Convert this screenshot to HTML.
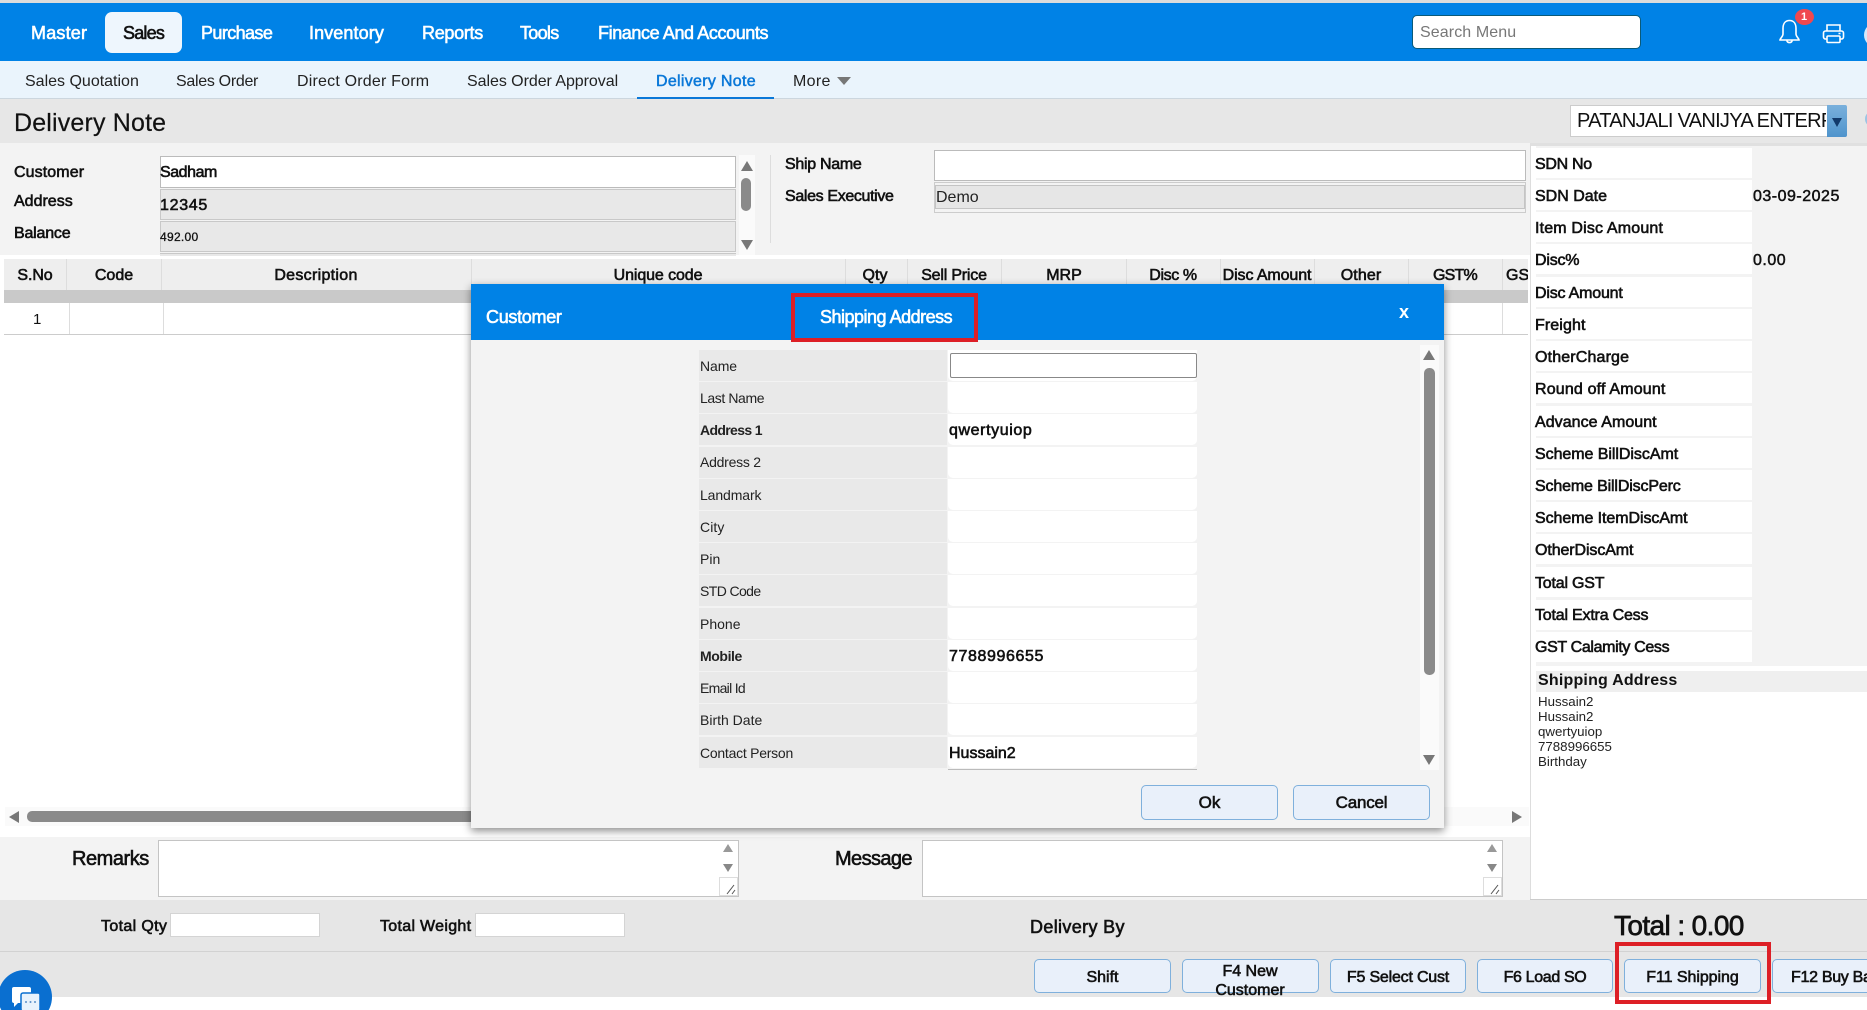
<!DOCTYPE html>
<html lang="en">
<head>
<meta charset="utf-8">
<title>Delivery Note</title>
<style>
html,body{margin:0;padding:0;background:#fff;width:1867px;height:1010px;overflow:hidden}
#page{width:1867px;height:1010px;position:relative;overflow:hidden;font-family:"Liberation Sans",Arial,sans-serif;color:#111;font-size:16px}
.b,.t,svg.a{position:absolute}
.t{white-space:nowrap;line-height:20px;height:20px}
.s{-webkit-text-stroke:.6px currentColor}
.n{color:#fff;font-size:18px;-webkit-text-stroke:.6px #fff;top:23px}
.sn{font-size:16px;top:72px;color:#222}
.th{font-size:16px;top:266px;-webkit-text-stroke:.6px #111;transform:translateX(-50%)}
.v{position:absolute;width:1px;background:#ddd}
.lb{position:absolute;left:699px;width:248px;height:31px;background:#e9e9e9}
.vl{position:absolute;left:948px;width:249px;height:31px;background:#fff;border-radius:0 0 5px 5px}
.ml{font-size:14px;left:700px;color:#222}
.mv{font-size:16px;left:949px;-webkit-text-stroke:.6px #111}
.rl{position:absolute;left:1536px;width:216px;height:30px;background:#fff}
.rt{left:1535px;font-size:16px;-webkit-text-stroke:.6px #111}
.btn{position:absolute;background:#e9f0fa;border:1px solid #7fb0dc;border-radius:5px;box-sizing:border-box;text-align:center;-webkit-text-stroke:.6px #111;font-size:16px;color:#111}
</style>
</head>
<body>
<div id="page">
<!-- top bars -->
<div class="b" style="left:0;top:0;width:1867px;height:3px;background:#dcdcdc"></div>
<div class="b" style="left:0;top:3px;width:1867px;height:58px;background:#0082e6"></div>
<div class="b" style="left:105px;top:12px;width:77px;height:41px;background:#eef6fd;border-radius:7px"></div>
<span class="t n" style="left:31px;letter-spacing:.2px">Master</span>
<span class="t n" style="left:123px;color:#111;-webkit-text-stroke:.6px #111;letter-spacing:-.8px">Sales</span>
<span class="t n" style="left:201px;letter-spacing:-.6px">Purchase</span>
<span class="t n" style="left:309px;letter-spacing:.1px">Inventory</span>
<span class="t n" style="left:422px;letter-spacing:-.3px">Reports</span>
<span class="t n" style="left:520px;letter-spacing:-.7px">Tools</span>
<span class="t n" style="left:598px;letter-spacing:-.4px">Finance And Accounts</span>

<div class="b" style="left:1412px;top:15px;width:229px;height:34px;box-sizing:border-box;background:#fff;border:1px solid #0a5a78;border-radius:5px"></div>
<span class="t" style="left:1420px;top:23px;font-size:16px;color:#777;letter-spacing:.1px">Search Menu</span>

<svg class="a" style="left:1777px;top:18px" width="25" height="28" viewBox="0 0 25 28" fill="none" stroke="#fff" stroke-width="1.6"><path d="M12.5 2.5C8 2.5 6 6 6 10.5V16C6 18.5 3 20.5 3 22H22C22 20.5 19 18.5 19 16V10.5C19 6 17 2.5 12.5 2.5Z"/><path d="M9.8 22.5a2.8 2.8 0 0 0 5.4 0"/></svg>
<div class="b" style="left:1795px;top:9px;width:19px;height:16px;border-radius:50%;background:#f0484f"></div>
<span class="t" style="left:1801px;top:7px;font-size:11px;color:#fff;font-weight:bold">1</span>
<svg class="a" style="left:1822px;top:23px" width="23" height="21" viewBox="0 0 23 21" fill="none" stroke="#fff" stroke-width="1.6"><path d="M5 8V2h13v6"/><rect x="1.5" y="8" width="20" height="8" rx="2"/><rect x="5" y="13" width="13" height="6.5" rx="1" fill="#0082e6"/><path d="M16.5 10.5h2"/></svg>
<div class="b" style="left:1864px;top:23px;width:24px;height:24px;border-radius:50%;background:#d6e9fb"></div>

<!-- sub nav -->
<div class="b" style="left:0;top:61px;width:1867px;height:37px;background:#eaf4fc"></div>
<div class="b" style="left:0;top:98px;width:1867px;height:1px;background:#ccd6de"></div>
<span class="t sn" style="left:25px;letter-spacing:0">Sales Quotation</span>
<span class="t sn" style="left:176px;letter-spacing:-.3px">Sales Order</span>
<span class="t sn" style="left:297px;letter-spacing:.2px">Direct Order Form</span>
<span class="t sn" style="left:467px;letter-spacing:-.05px">Sales Order Approval</span>
<span class="t sn" style="left:656px;color:#0a78d8;-webkit-text-stroke:.5px #0a78d8;letter-spacing:.3px">Delivery Note</span>
<span class="t sn" style="left:793px;letter-spacing:.3px">More</span>
<svg class="a" style="left:837px;top:77px" width="14" height="9"><polygon points="0,0 14,0 7,8" fill="#777"/></svg>
<div class="b" style="left:637px;top:97px;width:137px;height:2px;background:#0a78d8"></div>

<!-- title -->
<div class="b" style="left:0;top:99px;width:1867px;height:44px;background:#e7e7e7"></div>
<span class="t" style="left:14px;top:113px;font-size:25px;letter-spacing:.17px;-webkit-text-stroke:.2px #111">Delivery Note</span>
<div class="b" style="left:1570px;top:105px;width:276px;height:32px;box-sizing:border-box;background:#fff;border:1px solid #ccc;overflow:hidden"></div>
<span class="t" style="left:1577px;top:111px;font-size:20px;width:249px;overflow:hidden;letter-spacing:-.72px">PATANJALI VANIJYA ENTERPRISES</span>
<div class="b" style="left:1827px;top:105px;width:20px;height:32px;background:linear-gradient(#7ab0dc,#4f94cc);border-radius:0 2px 2px 0"></div>
<svg class="a" style="left:1831px;top:117px" width="12" height="11"><polygon points="1,1 11,1 6,10" fill="#123a6b"/></svg>
<div class="b" style="left:1865px;top:112px;width:12px;height:14px;border-radius:50%;border:2px solid #9cc4e4;box-sizing:border-box"></div>

<!-- form -->
<div class="b" style="left:0;top:143px;width:1530px;height:112px;background:#f3f3f3"></div>
<span class="t s" style="left:14px;top:163px;letter-spacing:.1px">Customer</span>
<span class="t s" style="left:14px;top:192px">Address</span>
<span class="t s" style="left:14px;top:224px;letter-spacing:-.2px">Balance</span>
<div class="b" style="left:160px;top:156px;width:576px;height:32px;box-sizing:border-box;background:#fff;border:1px solid #bbb"></div>
<div class="b" style="left:160px;top:189px;width:576px;height:31px;box-sizing:border-box;background:#e8e8e8;border:1px solid #c8c8c8"></div>
<div class="b" style="left:160px;top:221px;width:576px;height:31px;box-sizing:border-box;background:#e8e8e8;border:1px solid #c8c8c8"></div>
<div class="b" style="left:160px;top:253px;width:576px;height:2px;background:#e8e8e8;border-top:1px solid #c8c8c8"></div>
<span class="t s" style="left:160px;top:163px;letter-spacing:-.45px">Sadham</span>
<span class="t s" style="left:160px;top:196px;letter-spacing:.7px">12345</span>
<span class="t" style="left:160px;top:227px;font-size:12px;letter-spacing:.3px;-webkit-text-stroke:.3px #111">492.00</span>
<div class="b" style="left:739px;top:155px;width:16px;height:100px;background:#fafafa"></div>
<svg class="a" style="left:741px;top:161px" width="12" height="10"><polygon points="6,0 12,10 0,10" fill="#777"/></svg>
<div class="b" style="left:741px;top:178px;width:10px;height:33px;border-radius:5px;background:#8a8a8a"></div>
<svg class="a" style="left:741px;top:240px" width="12" height="10"><polygon points="0,0 12,0 6,10" fill="#777"/></svg>
<div class="v" style="left:770px;top:155px;height:88px;background:#ddd"></div>

<span class="t s" style="left:785px;top:155px;letter-spacing:-.3px">Ship Name</span>
<span class="t s" style="left:785px;top:187px;letter-spacing:-.35px">Sales Executive</span>
<div class="b" style="left:934px;top:150px;width:592px;height:31px;box-sizing:border-box;background:#fff;border:1px solid #bbb"></div>
<div class="b" style="left:934px;top:182px;width:592px;height:31px;box-sizing:border-box;background:#f3f3f3;border:1px solid #ccc"></div>
<div class="b" style="left:935px;top:185px;width:590px;height:24px;box-sizing:border-box;background:#e6e6e6;border:1px solid #c4c4c4"></div>
<span class="t" style="left:936px;top:188px;color:#222">Demo</span>

<!-- table -->
<div class="b" style="left:4px;top:259px;width:1524px;height:31px;background:#eee"></div>
<div class="b" style="left:4px;top:290px;width:1524px;height:13px;background:#c9c9c9"></div>
<div class="b" style="left:4px;top:334px;width:1524px;height:1px;background:#ccc"></div>
<div class="v" style="left:66px;top:259px;height:31px"></div>
<div class="v" style="left:161px;top:259px;height:31px"></div>
<div class="v" style="left:471px;top:259px;height:31px"></div>
<div class="v" style="left:845px;top:259px;height:31px"></div>
<div class="v" style="left:907px;top:259px;height:31px"></div>
<div class="v" style="left:1001px;top:259px;height:31px"></div>
<div class="v" style="left:1126px;top:259px;height:31px"></div>
<div class="v" style="left:1220px;top:259px;height:31px"></div>
<div class="v" style="left:1314px;top:259px;height:31px"></div>
<div class="v" style="left:1408px;top:259px;height:31px"></div>
<div class="v" style="left:1502px;top:259px;height:31px"></div>
<div class="v" style="left:69px;top:303px;height:31px"></div>
<div class="v" style="left:163px;top:303px;height:31px"></div>
<div class="v" style="left:1502px;top:303px;height:31px"></div>
<span class="t th" style="left:35px;letter-spacing:-.1px">S.No</span>
<span class="t th" style="left:114px">Code</span>
<span class="t th" style="left:316px;letter-spacing:.3px">Description</span>
<span class="t th" style="left:658px;letter-spacing:-.1px">Unique code</span>
<span class="t th" style="left:875px">Qty</span>
<span class="t th" style="left:954px;letter-spacing:-.2px">Sell Price</span>
<span class="t th" style="left:1064px">MRP</span>
<span class="t th" style="left:1173px;letter-spacing:-.4px">Disc %</span>
<span class="t th" style="left:1267px;letter-spacing:-.1px">Disc Amount</span>
<span class="t th" style="left:1361px;letter-spacing:.1px">Other</span>
<span class="t th" style="left:1455px;letter-spacing:-.8px">GST%</span>
<span class="t" style="left:1506px;top:266px;width:22px;overflow:hidden;-webkit-text-stroke:.6px #111">GST</span>
<span class="t" style="left:33px;top:310px;font-size:15px">1</span>

<!-- horizontal scrollbar -->
<div class="b" style="left:5px;top:807px;width:1524px;height:19px;background:#fafafa"></div>
<svg class="a" style="left:9px;top:811px" width="11" height="12"><polygon points="0,6 10,0 10,12" fill="#777"/></svg>
<div class="b" style="left:27px;top:811px;width:460px;height:11px;border-radius:5px;background:#8a8a8a"></div>
<svg class="a" style="left:1512px;top:811px" width="11" height="12"><polygon points="0,0 10,6 0,12" fill="#777"/></svg>

<!-- right panel -->
<div class="b" style="left:1530px;top:143px;width:337px;height:756px;box-sizing:border-box;background:#fff;border-left:1px solid #ddd;border-top:3px solid #e0e0e0"></div>
<div class="b" style="left:1536px;top:146px;width:331px;height:520px;background:#f3f3f3"></div>
<div class="b" style="left:1530px;top:899px;width:337px;height:1px;background:#ccc"></div>
<div class="rl" style="top:148px"></div><span class="t rt" style="top:155px;letter-spacing:-.3px">SDN No</span>
<div class="rl" style="top:180px"></div><span class="t rt" style="top:187px;letter-spacing:0">SDN Date</span>
<div class="rl" style="top:212px"></div><span class="t rt" style="top:219px;letter-spacing:.17px">Item Disc Amount</span>
<div class="rl" style="top:244px"></div><span class="t rt" style="top:251px;letter-spacing:-.2px">Disc%</span>
<div class="rl" style="top:277px"></div><span class="t rt" style="top:284px;letter-spacing:-.2px">Disc Amount</span>
<div class="rl" style="top:309px"></div><span class="t rt" style="top:316px;letter-spacing:.1px">Freight</span>
<div class="rl" style="top:341px"></div><span class="t rt" style="top:348px;letter-spacing:.15px">OtherCharge</span>
<div class="rl" style="top:373px"></div><span class="t rt" style="top:380px;letter-spacing:.17px">Round off Amount</span>
<div class="rl" style="top:406px"></div><span class="t rt" style="top:413px;letter-spacing:.05px">Advance Amount</span>
<div class="rl" style="top:438px"></div><span class="t rt" style="top:445px;letter-spacing:-.05px">Scheme BillDiscAmt</span>
<div class="rl" style="top:470px"></div><span class="t rt" style="top:477px;letter-spacing:-.15px">Scheme BillDiscPerc</span>
<div class="rl" style="top:502px"></div><span class="t rt" style="top:509px;letter-spacing:-.07px">Scheme ItemDiscAmt</span>
<div class="rl" style="top:534px"></div><span class="t rt" style="top:541px;letter-spacing:-.1px">OtherDiscAmt</span>
<div class="rl" style="top:567px"></div><span class="t rt" style="top:574px;letter-spacing:-.2px">Total GST</span>
<div class="rl" style="top:600px"></div><span class="t rt" style="top:606px;letter-spacing:-.2px">Total Extra Cess</span>
<div class="rl" style="top:632px"></div><span class="t rt" style="top:638px;letter-spacing:-.35px">GST Calamity Cess</span>
<span class="t" style="left:1753px;top:187px;-webkit-text-stroke:.5px #111;letter-spacing:.5px">03-09-2025</span>
<span class="t" style="left:1753px;top:251px;-webkit-text-stroke:.5px #111;letter-spacing:.5px">0.00</span>
<div class="b" style="left:1536px;top:666px;width:331px;height:233px;background:#fff"></div>
<div class="b" style="left:1536px;top:671px;width:331px;height:21px;background:#efefef"></div>
<span class="t" style="left:1538px;top:671px;font-size:16px;font-weight:bold;letter-spacing:.2px">Shipping Address</span>
<span class="t" style="left:1538px;top:692px;font-size:13.3px;color:#222">Hussain2</span>
<span class="t" style="left:1538px;top:707px;font-size:13.3px;color:#222">Hussain2</span>
<span class="t" style="left:1538px;top:722px;font-size:13.3px;color:#222">qwertyuiop</span>
<span class="t" style="left:1538px;top:737px;font-size:13.3px;color:#222">7788996655</span>
<span class="t" style="left:1538px;top:752px;font-size:13.3px;color:#222">Birthday</span>

<!-- remarks -->
<div class="b" style="left:0;top:837px;width:1530px;height:63px;background:#f3f3f3"></div>
<span class="t s" style="left:72px;top:849px;font-size:20px;letter-spacing:-.45px">Remarks</span>
<div class="b" style="left:158px;top:840px;width:581px;height:57px;box-sizing:border-box;background:#fff;border:1px solid #c4c4c4"></div>
<svg class="a" style="left:723px;top:844px" width="10" height="30"><polygon points="5,0 10,8 0,8" fill="#999"/><polygon points="0,20 10,20 5,28" fill="#888"/></svg>
<div class="b" style="left:719px;top:877px;width:19px;height:19px;box-sizing:border-box;background:#fff;border:1px solid #ddd"></div>
<svg class="a" style="left:726px;top:884px" width="11" height="11" stroke="#555" fill="none"><path d="M1 10L8 1M6 10L9 6"/></svg>
<span class="t s" style="left:835px;top:849px;font-size:20px;letter-spacing:-.6px">Message</span>
<div class="b" style="left:922px;top:840px;width:581px;height:57px;box-sizing:border-box;background:#fff;border:1px solid #c4c4c4"></div>
<svg class="a" style="left:1487px;top:844px" width="10" height="30"><polygon points="5,0 10,8 0,8" fill="#999"/><polygon points="0,20 10,20 5,28" fill="#888"/></svg>
<div class="b" style="left:1483px;top:877px;width:19px;height:19px;box-sizing:border-box;background:#fff;border:1px solid #ddd"></div>
<svg class="a" style="left:1490px;top:884px" width="11" height="11" stroke="#555" fill="none"><path d="M1 10L8 1M6 10L9 6"/></svg>

<!-- bottom -->
<div class="b" style="left:0;top:900px;width:1867px;height:97px;background:#e6e6e6"></div>
<div class="b" style="left:0;top:951px;width:1867px;height:1px;background:#d2d2d2"></div>
<span class="t s" style="left:101px;top:917px;letter-spacing:.35px">Total Qty</span>
<div class="b" style="left:170px;top:913px;width:150px;height:24px;box-sizing:border-box;background:#fff;border:1px solid #d4d4d4"></div>
<span class="t s" style="left:380px;top:917px;letter-spacing:.3px">Total Weight</span>
<div class="b" style="left:475px;top:913px;width:150px;height:24px;box-sizing:border-box;background:#fff;border:1px solid #d4d4d4"></div>
<span class="t s" style="left:1030px;top:917px;font-size:18px;letter-spacing:.35px">Delivery By</span>
<span class="t" style="left:1614px;top:916px;font-size:28px;letter-spacing:-.6px;-webkit-text-stroke:.7px #111">Total : 0.00</span>

<div class="btn" style="left:1034px;top:959px;width:137px;height:34px;line-height:36px">Shift</div>
<div class="btn" style="left:1182px;top:959px;width:137px;height:34px"></div>
<span class="t s" style="left:1250px;top:962px;transform:translateX(-50%)">F4 New</span>
<span class="t s" style="left:1250px;top:981px;transform:translateX(-50%)">Customer</span>
<div class="btn" style="left:1330px;top:959px;width:136px;height:34px;line-height:36px;letter-spacing:-.2px">F5 Select Cust</div>
<div class="btn" style="left:1477px;top:959px;width:136px;height:34px;line-height:36px;letter-spacing:-.35px">F6 Load SO</div>
<div class="btn" style="left:1624px;top:959px;width:137px;height:34px;line-height:36px;letter-spacing:-.05px">F11 Shipping</div>
<div class="btn" style="left:1772px;top:959px;width:130px;height:34px;line-height:36px;text-align:left;padding-left:18px;letter-spacing:-.3px;white-space:nowrap">F12 Buy Back</div>
<div class="b" style="left:1615px;top:942px;width:156px;height:62px;box-sizing:border-box;border:4px solid #dd1f26"></div>

<!-- chat -->
<div class="b" style="left:-2px;top:970px;width:54px;height:54px;border-radius:50%;background:#0a6fd0"></div>
<svg class="a" style="left:10px;top:985px" width="32" height="25" viewBox="0 0 32 25"><path d="M4 2h15a2 2 0 0 1 2 2v12a2 2 0 0 1-2 2H8l-4 4v-4H4a2 2 0 0 1-2-2V4a2 2 0 0 1 2-2z" fill="#fff"/><rect x="11" y="8" width="19" height="18" rx="2" fill="#e8f2fc" stroke="#0a6fd0" stroke-width="1.5"/><g fill="#5a8fc8"><circle cx="16" cy="17" r="1"/><circle cx="20.5" cy="17" r="1"/><circle cx="25" cy="17" r="1"/></g></svg>

<!-- modal -->
<div class="b" style="left:471px;top:284px;width:973px;height:544px;background:#f3f3f3;box-shadow:0 3px 8px rgba(0,0,0,.45)"></div>
<div class="b" style="left:471px;top:284px;width:973px;height:56px;background:#0082e6"></div>
<span class="t" style="left:486px;top:307px;font-size:18px;color:#fff;-webkit-text-stroke:.6px #fff;letter-spacing:-.3px">Customer</span>
<div class="b" style="left:791px;top:293px;width:187px;height:49px;box-sizing:border-box;border:4px solid #dd1f26"></div>
<span class="t" style="left:820px;top:307px;font-size:18px;color:#fff;-webkit-text-stroke:.6px #fff;letter-spacing:-.5px">Shipping Address</span>
<span class="t" style="left:1399px;top:302px;font-size:18px;color:#fff;font-weight:bold">x</span>

<div class="lb" style="top:350px"></div><div class="vl" style="top:350px"></div>
<div class="lb" style="top:382px"></div><div class="vl" style="top:382px"></div>
<div class="lb" style="top:414px"></div><div class="vl" style="top:414px"></div>
<div class="lb" style="top:447px"></div><div class="vl" style="top:447px"></div>
<div class="lb" style="top:479px"></div><div class="vl" style="top:479px"></div>
<div class="lb" style="top:511px"></div><div class="vl" style="top:511px"></div>
<div class="lb" style="top:543px"></div><div class="vl" style="top:543px"></div>
<div class="lb" style="top:575px"></div><div class="vl" style="top:575px"></div>
<div class="lb" style="top:608px"></div><div class="vl" style="top:608px"></div>
<div class="lb" style="top:640px"></div><div class="vl" style="top:640px"></div>
<div class="lb" style="top:672px"></div><div class="vl" style="top:672px"></div>
<div class="lb" style="top:704px"></div><div class="vl" style="top:704px"></div>
<div class="lb" style="top:737px"></div><div class="vl" style="top:737px"></div>
<div class="b" style="left:948px;top:769px;width:249px;height:1px;background:#bbb"></div>
<div class="b" style="left:950px;top:353px;width:247px;height:25px;box-sizing:border-box;background:#fff;border:1px solid #888;border-radius:2px"></div>
<span class="t ml" style="top:356px;letter-spacing:-.1px">Name</span>
<span class="t ml" style="top:388px;letter-spacing:-.4px">Last Name</span>
<span class="t ml" style="top:420px;font-weight:bold;letter-spacing:-.65px">Address 1</span>
<span class="t ml" style="top:452px;letter-spacing:-.25px">Address 2</span>
<span class="t ml" style="top:485px;letter-spacing:-.1px">Landmark</span>
<span class="t ml" style="top:517px;letter-spacing:.1px">City</span>
<span class="t ml" style="top:549px">Pin</span>
<span class="t ml" style="top:581px;letter-spacing:-.6px">STD Code</span>
<span class="t ml" style="top:614px">Phone</span>
<span class="t ml" style="top:646px;font-weight:bold;letter-spacing:-.4px">Mobile</span>
<span class="t ml" style="top:678px;letter-spacing:-.7px">Email Id</span>
<span class="t ml" style="top:710px">Birth Date</span>
<span class="t ml" style="top:743px;letter-spacing:-.25px">Contact Person</span>
<span class="t mv" style="top:421px;letter-spacing:.6px">qwertyuiop</span>
<span class="t mv" style="top:647px;letter-spacing:.6px">7788996655</span>
<span class="t mv" style="top:744px">Hussain2</span>

<div class="b" style="left:1420px;top:345px;width:19px;height:425px;background:#fafafa"></div>
<svg class="a" style="left:1423px;top:350px" width="12" height="10"><polygon points="6,0 12,10 0,10" fill="#777"/></svg>
<div class="b" style="left:1424px;top:368px;width:11px;height:307px;border-radius:5px;background:#8a8a8a"></div>
<svg class="a" style="left:1423px;top:755px" width="12" height="10"><polygon points="0,0 12,0 6,10" fill="#777"/></svg>

<div class="btn" style="left:1141px;top:785px;width:137px;height:35px;line-height:34px;font-size:17px">Ok</div>
<div class="btn" style="left:1293px;top:785px;width:137px;height:35px;line-height:34px;font-size:17px;letter-spacing:-.2px">Cancel</div>
</div>
</body>
</html>
